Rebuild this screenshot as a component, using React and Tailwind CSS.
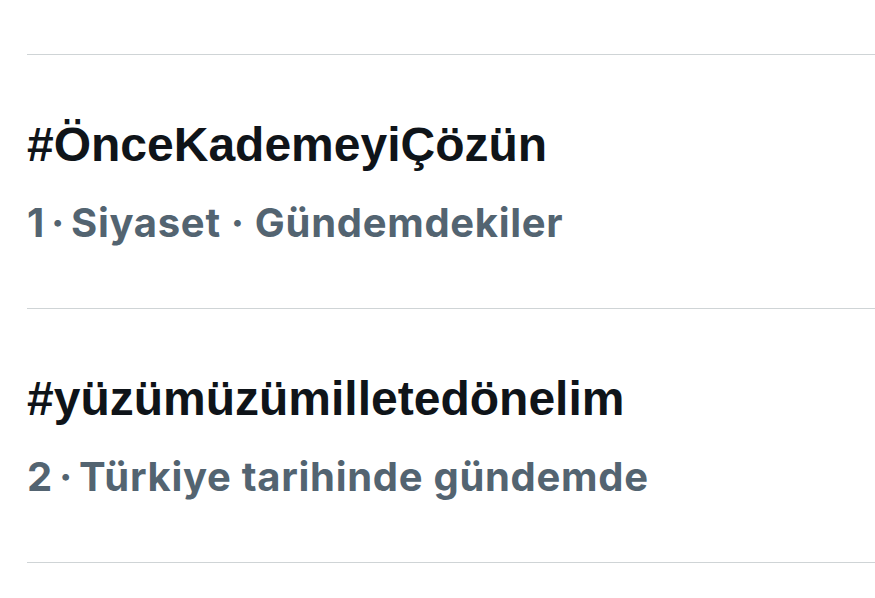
export default function App() {
  const items = [
    { tag: "#ÖnceKademeyiÇözün", meta: ["1", "Siyaset", "Gündemdekiler"] },
    { tag: "#yüzümüzümilletedönelim", meta: ["2", "Türkiye tarihinde gündemde"] },
  ];
  return (
    <div className="w-[875px] h-[598px] bg-white overflow-hidden pt-[54px] pl-[27px]">
      {items.map((it, i) => (
        <div key={i} className="border-t border-[#cfd4d6] pt-[61px] pb-[61px]">
          <div className="text-[48px] leading-[58px] font-bold text-[#0f1419] whitespace-nowrap font-['Liberation_Sans',Arial,sans-serif]">{it.tag}</div>
          <div className="mt-[25px] text-[40px] leading-[48px] font-bold tracking-[0.7px] text-[#536471] whitespace-nowrap font-['Inter',sans-serif]">
            {it.meta.map((m, j) => (
              <span key={j}>
                {j > 0 && <span className={j === 1 ? "mx-[6px]" : "mx-[10px]"}>·</span>}
                {m}
              </span>
            ))}
          </div>
        </div>
      ))}
      <div className="border-t border-[#cfd4d6]" />
    </div>
  );
}
